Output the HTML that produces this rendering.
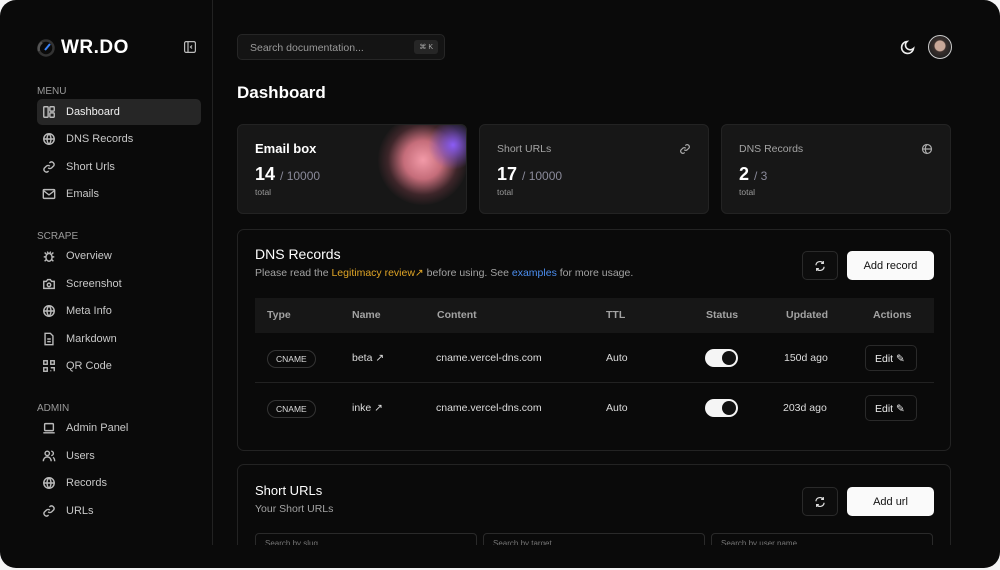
<!DOCTYPE html>
<html><head><meta charset="utf-8"><style>
*{box-sizing:border-box;margin:0;padding:0}
body{width:1000px;height:570px;background:#f4f4f5;font-family:"Liberation Sans",sans-serif;overflow:hidden;position:relative}
.win{position:absolute;left:0;top:0;width:1000px;height:568px;background:#0a0a0a;border-radius:16px;overflow:hidden;color:#e5e5e5}
.side{position:absolute;left:0;top:0;width:213px;height:545px;border-right:1px solid #222}
.logo{position:absolute;left:37px;top:37px;display:flex;align-items:center;gap:6px;font-weight:900;font-size:19px;color:#fff;letter-spacing:0.5px}
.sec{position:absolute;left:37px;font-size:10px;color:#9a9a9a}
.item{position:absolute;left:37px;width:164px;height:26px;border-radius:5px;display:flex;align-items:center;padding-left:5px;font-size:11px;color:#c8c8c8;gap:10px}
.item.act{background:#262626;color:#f0f0f0}
.item svg{width:14px;height:14px;stroke:#bbb;fill:none;stroke-width:1.6}
.search{position:absolute;left:237px;top:34px;width:208px;height:26px;border:1px solid #262626;background:#141414;border-radius:5px;font-size:10.5px;color:#9a9a9a;padding:7px 12px}
.kbd{position:absolute;right:6px;top:5px;background:#262626;border-radius:3px;font-size:7px;padding:3px 5px;color:#aaa}
h1{position:absolute;left:237px;top:83px;font-size:17px;color:#fff;font-weight:700}
.card{position:absolute;top:124px;width:230px;height:90px;background:#171717;border:1px solid #232323;border-radius:6px;overflow:hidden}
.card .t{position:absolute;left:17px;top:18px;font-size:10.5px;color:#a3a3a3}
.card .n{position:absolute;left:17px;top:39px;font-size:18px;font-weight:700;color:#fff}
.card .n span{font-size:12px;color:#8a8a9a;font-weight:400;margin-left:5px}
.card .s{position:absolute;left:17px;top:62px;font-size:8.5px;color:#9a9a9a}
.panel{position:absolute;left:237px;width:714px;border:1px solid #232323;border-radius:7px;background:#0a0a0a}
.btn{position:absolute;height:29px;border-radius:5px;font-size:11px;display:flex;align-items:center;justify-content:center}
.bo{border:1px solid #2a2a2a;background:#0d0d0d;width:36px}
.bw{background:#fafafa;color:#111;width:87px}
.th{position:absolute;left:17px;top:68px;width:679px;height:35px;background:#171717;font-size:10.5px;font-weight:700;color:#a3a3a3}
.c{position:absolute;font-size:10.5px;color:#ddd}
.tag{position:absolute;left:29px;border:1px solid #333;border-radius:9px;font-size:8.5px;padding:3px 8px;color:#ddd}
.tog{position:absolute;left:467px;width:33px;height:18px;background:#f5f5f5;border-radius:9px}
.tog:after{content:"";position:absolute;right:2px;top:2px;width:14px;height:14px;background:#111;border-radius:50%}
.edit{position:absolute;left:627px;width:52px;height:26px;border:1px solid #2a2a2a;border-radius:5px;font-size:10.5px;color:#eee;padding:7px 0 0 9px}
.inp{position:absolute;top:68px;width:222px;height:20px;border:1px solid #2a2a2a;border-radius:4px;font-size:8px;color:#777;padding:5px 9px;overflow:hidden}
</style></head><body>
<div class="win">
<div class="side">
<div class="logo"><svg width="18" height="18" viewBox="0 0 18 18"><circle cx="9" cy="9" r="7.5" fill="none" stroke="#333" stroke-width="2.5"/><path d="M2 12A7.5 7.5 0 0 1 5 3.5" stroke="#555" stroke-width="2.5" fill="none"/><path d="M8 11l5-6" stroke="#3b82f6" stroke-width="2"/></svg>WR.DO</div>
<svg style="position:absolute;left:184px;top:41px" width="12" height="12" viewBox="0 0 12 12" fill="none" stroke="#bbb" stroke-width="1.2"><rect x="0.6" y="0.6" width="10.8" height="10.8" rx="1.5"/><path d="M4 1v10M8 4.5L6.5 6 8 7.5"/></svg>
<div class="sec" style="top:86px">MENU</div>
<div class="item act" style="top:99px"><svg viewBox="0 0 16 16"><rect x="2" y="2" width="5" height="12" rx="1"/><rect x="9" y="2" width="5" height="5" rx="1"/><rect x="9" y="9" width="5" height="5" rx="1"/></svg>Dashboard</div>
<div class="item" style="top:126px"><svg viewBox="0 0 16 16"><circle cx="8" cy="8" r="6"/><path d="M2 8h12M8 2c-3 3-3 9 0 12M8 2c3 3 3 9 0 12"/></svg>DNS Records</div>
<div class="item" style="top:154px"><svg viewBox="0 0 16 16"><path d="M7 9a3 3 0 0 0 4 0l2.5-2.5a3 3 0 0 0-4-4L8.5 3.5M9 7a3 3 0 0 0-4 0L2.5 9.5a3 3 0 0 0 4 4l1-1"/></svg>Short Urls</div>
<div class="item" style="top:181px"><svg viewBox="0 0 16 16"><rect x="1.5" y="3" width="13" height="10" rx="1"/><path d="M1.5 4l6.5 5 6.5-5"/></svg>Emails</div>
<div class="sec" style="top:231px">SCRAPE</div>
<div class="item" style="top:243px"><svg viewBox="0 0 16 16"><ellipse cx="8" cy="9.5" rx="3.5" ry="4.5"/><path d="M2 9h2.5M11.5 9H14M3 4l2 2M13 4l-2 2M3 14l2-2M13 14l-2-2M6 3l1 1.5M10 3l-1 1.5"/></svg>Overview</div>
<div class="item" style="top:271px"><svg viewBox="0 0 16 16"><path d="M2 5h3l1.5-2h3L11 5h3v8H2z"/><circle cx="8" cy="9" r="2"/></svg>Screenshot</div>
<div class="item" style="top:298px"><svg viewBox="0 0 16 16"><circle cx="8" cy="8" r="6"/><path d="M2 8h12M8 2c-3 3-3 9 0 12M8 2c3 3 3 9 0 12"/></svg>Meta Info</div>
<div class="item" style="top:326px"><svg viewBox="0 0 16 16"><path d="M3.5 1.5h6l3 3v10h-9z M6 8h4M6 11h4"/></svg>Markdown</div>
<div class="item" style="top:353px"><svg viewBox="0 0 16 16"><rect x="2" y="2" width="4" height="4"/><rect x="10" y="2" width="4" height="4"/><rect x="2" y="10" width="4" height="4"/><path d="M10 10h4v4M10 13v1"/></svg>QR Code</div>
<div class="sec" style="top:403px">ADMIN</div>
<div class="item" style="top:415px"><svg viewBox="0 0 16 16"><rect x="3" y="3" width="10" height="8" rx="1"/><path d="M1.5 13.5h13"/></svg>Admin Panel</div>
<div class="item" style="top:443px"><svg viewBox="0 0 16 16"><circle cx="6" cy="5" r="2.5"/><path d="M1.5 14c0-3 2-5 4.5-5s4.5 2 4.5 5M10.5 2.5a2.5 2.5 0 0 1 0 5M12.5 9.5c1.3.7 2 2.3 2 4.5"/></svg>Users</div>
<div class="item" style="top:470px"><svg viewBox="0 0 16 16"><circle cx="8" cy="8" r="6"/><path d="M2 8h12M8 2c-3 3-3 9 0 12M8 2c3 3 3 9 0 12"/></svg>Records</div>
<div class="item" style="top:498px"><svg viewBox="0 0 16 16"><path d="M7 9a3 3 0 0 0 4 0l2.5-2.5a3 3 0 0 0-4-4L8.5 3.5M9 7a3 3 0 0 0-4 0L2.5 9.5a3 3 0 0 0 4 4l1-1"/></svg>URLs</div>
</div>
<div class="search">Search documentation...<span class="kbd">⌘ K</span></div>
<svg style="position:absolute;left:900px;top:39px" width="16" height="16" viewBox="0 0 16 16" fill="none" stroke="#eee" stroke-width="1.6"><path d="M13.5 9.5A6 6 0 1 1 7 2.5a4.5 4.5 0 0 0 6.5 7z"/></svg>
<div style="position:absolute;left:928px;top:35px;width:24px;height:24px;border-radius:50%;border:1.5px solid #ccc;background:radial-gradient(circle at 50% 45%,#c9a898 0 5px,#3a2f2c 6px,#222 12px)"></div>
<h1>Dashboard</h1>
<div class="card" style="left:237px"><div style="position:absolute;left:140px;top:-10px;width:90px;height:90px;border-radius:50%;background:radial-gradient(circle,#f29aa8 0,#c56d7a 30%,rgba(120,60,70,0.4) 55%,transparent 72%)"></div><div style="position:absolute;left:190px;top:-5px;width:50px;height:50px;border-radius:50%;background:radial-gradient(circle,#8b5cf6 0,rgba(120,80,200,0.5) 40%,transparent 70%)"></div><div class="t" style="color:#fff;font-weight:700;font-size:13px;top:16px">Email box</div><div class="n">14<span>/ 10000</span></div><div class="s">total</div></div>
<div class="card" style="left:479px"><div class="t">Short URLs</div><svg style="position:absolute;right:17px;top:18px" width="12" height="12" viewBox="0 0 16 16" fill="none" stroke="#aaa" stroke-width="1.6"><path d="M7 9a3 3 0 0 0 4 0l2.5-2.5a3 3 0 0 0-4-4L8.5 3.5M9 7a3 3 0 0 0-4 0L2.5 9.5a3 3 0 0 0 4 4l1-1"/></svg><div class="n">17<span>/ 10000</span></div><div class="s">total</div></div>
<div class="card" style="left:721px"><div class="t">DNS Records</div><svg style="position:absolute;right:17px;top:18px" width="12" height="12" viewBox="0 0 16 16" fill="none" stroke="#aaa" stroke-width="1.6"><circle cx="8" cy="8" r="6"/><path d="M2 8h12M8 2c-3 3-3 9 0 12"/></svg><div class="n">2<span>/ 3</span></div><div class="s">total</div></div>
<div class="panel" style="top:229px;height:222px">
<div style="position:absolute;left:17px;top:16px;font-size:14px;color:#fff">DNS Records</div>
<div style="position:absolute;left:17px;top:37px;font-size:10.5px;color:#a3a3a3">Please read the <span style="color:#e0a526">Legitimacy review↗</span> before using. See <span style="color:#4b8ef0">examples</span> for more usage.</div>
<div class="btn bo" style="left:564px;top:21px"><svg width="12" height="12" viewBox="0 0 16 16" fill="none" stroke="#ddd" stroke-width="1.6"><path d="M2.5 7a5.5 5.5 0 0 1 10-2.5M13.5 9a5.5 5.5 0 0 1-10 2.5M12.5 1.5v3h-3M3.5 14.5v-3h3"/></svg></div>
<div class="btn bw" style="left:609px;top:21px">Add record</div>
<div class="th"><span style="position:absolute;left:12px;top:11px">Type</span><span style="position:absolute;left:97px;top:11px">Name</span><span style="position:absolute;left:182px;top:11px">Content</span><span style="position:absolute;left:351px;top:11px">TTL</span><span style="position:absolute;left:451px;top:11px">Status</span><span style="position:absolute;left:531px;top:11px">Updated</span><span style="position:absolute;left:618px;top:11px">Actions</span></div>
<div class="tag" style="top:120px">CNAME</div><div class="c" style="left:114px;top:122px">beta ↗</div><div class="c" style="left:198px;top:122px">cname.vercel-dns.com</div><div class="c" style="left:368px;top:122px">Auto</div><div class="tog" style="top:119px"></div><div class="c" style="left:546px;top:122px">150d ago</div><div class="edit" style="top:115px">Edit ✎</div>
<div style="position:absolute;left:17px;top:152px;width:679px;border-top:1px solid #222"></div>
<div class="tag" style="top:170px">CNAME</div><div class="c" style="left:114px;top:172px">inke ↗</div><div class="c" style="left:198px;top:172px">cname.vercel-dns.com</div><div class="c" style="left:368px;top:172px">Auto</div><div class="tog" style="top:169px"></div><div class="c" style="left:545px;top:172px">203d ago</div><div class="edit" style="top:165px">Edit ✎</div>
</div>
<div style="position:absolute;left:237px;top:464px;width:714px;height:81px;overflow:hidden">
<div class="panel" style="left:0;top:0;height:120px">
<div style="position:absolute;left:17px;top:18px;font-size:13px;color:#fff">Short URLs</div>
<div style="position:absolute;left:17px;top:38px;font-size:10.5px;color:#a3a3a3">Your Short URLs</div>
<div class="btn bo" style="left:564px;top:22px"><svg width="12" height="12" viewBox="0 0 16 16" fill="none" stroke="#ddd" stroke-width="1.6"><path d="M2.5 7a5.5 5.5 0 0 1 10-2.5M13.5 9a5.5 5.5 0 0 1-10 2.5M12.5 1.5v3h-3M3.5 14.5v-3h3"/></svg></div>
<div class="btn bw" style="left:609px;top:22px">Add url</div>
<div class="inp" style="left:17px">Search by slug...</div><div class="inp" style="left:245px">Search by target...</div><div class="inp" style="left:473px">Search by user name...</div>
</div></div>
</div>
</body></html>
